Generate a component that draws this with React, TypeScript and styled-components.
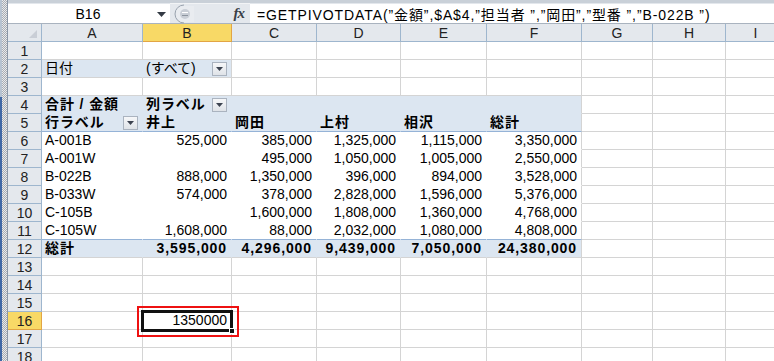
import styled, { createGlobalStyle } from "styled-components";

const GlobalStyle = createGlobalStyle`
  html, body {
    margin: 0;
    padding: 0;
    background: #ffffff;
    overflow: hidden;
  }
  * {
    box-sizing: border-box;
  }
`;

const FONT = `"Liberation Sans", "Noto Sans CJK JP", sans-serif`;

const GRID = "#d4d4d4";
const HEAD_LINE = "#9eb6ce";
const PIVOT = "#dce6f1";
const PIVOT_LINE = "#95b3d7";

const COLS = [101, 89, 85, 84, 86, 95, 71, 73, 60];
const LETTERS = ["A", "B", "C", "D", "E", "F", "G", "H", "I"];
const ROW_COUNT = 18;

type CellSpec = {
    text?: string;
    right?: boolean;
    bold?: boolean;
    drop?: boolean;
    selected?: boolean;
};

const names = ["井上", "岡田", "上村", "相沢", "総計"];

const data: [string, string[]][] = [
    ["A-001B", ["525,000", "385,000", "1,325,000", "1,115,000", "3,350,000"]],
    ["A-001W", ["", "495,000", "1,050,000", "1,005,000", "2,550,000"]],
    ["B-022B", ["888,000", "1,350,000", "396,000", "894,000", "3,528,000"]],
    ["B-033W", ["574,000", "378,000", "2,828,000", "1,596,000", "5,376,000"]],
    ["C-105B", ["", "1,600,000", "1,808,000", "1,360,000", "4,768,000"]],
    ["C-105W", ["1,608,000", "88,000", "2,032,000", "1,080,000", "4,808,000"]],
];

const totals = ["3,595,000", "4,296,000", "9,439,000", "7,050,000", "24,380,000"];

// 행/열 번호로 셀 내용 결정
const cellAt = (r: number, c: number): CellSpec => {
    if (r === 2 && c === 0) return { text: "日付" };
    if (r === 2 && c === 1) return { text: "(すべて)", drop: true };
    if (r === 4 && c === 0) return { text: "合計 / 金額", bold: true };
    if (r === 4 && c === 1) return { text: "列ラベル", bold: true, drop: true };
    if (r === 5 && c === 0) return { text: "行ラベル", bold: true, drop: true };
    if (r === 5 && c >= 1 && c <= 5) return { text: names[c - 1], bold: true };
    if (r >= 6 && r <= 11 && c <= 5) {
        const [label, vals] = data[r - 6];
        if (c === 0) return { text: label };
        return { text: vals[c - 1], right: true };
    }
    if (r === 12 && c === 0) return { text: "総計", bold: true };
    if (r === 12 && c >= 1 && c <= 5) return { text: totals[c - 1], bold: true, right: true };
    if (r === 16 && c === 1) return { text: "1350000", right: true, selected: true };
    return {};
};

type Fill = "none" | "blue" | "white";

const fillAt = (r: number, c: number): Fill => {
    if (r === 2 && c <= 1) return "blue";
    if ((r === 4 || r === 5 || r === 12) && c <= 5) return "blue";
    if (r >= 6 && r <= 11 && c <= 5) return "white";
    return "none";
};

const bordersAt = (r: number, c: number, fill: Fill) => {
    const same = fill === "blue" ? PIVOT : "#ffffff";
    let rb = GRID;
    let bb = GRID;
    if (fill !== "none") {
        const lastCol = r === 2 ? 1 : 5;
        if (c < lastCol) rb = same;
    }
    if (c <= 5) {
        if (r === 5 || r === 11) bb = PIVOT_LINE;
        else if (r === 4) bb = PIVOT;
        else if (r >= 6 && r <= 10) bb = "#ffffff";
    }
    return { rb, bb };
};

const DropButton = () => (
    <Drop>
        <svg width="7" height="4" viewBox="0 0 7 4">
            <path d="M0 0 H7 L3.5 4 Z" fill="#3c4350" />
        </svg>
    </Drop>
);

const OvalButton = () => (
    <svg width="20" height="20" viewBox="0 0 20 20">
        <path d="M10 1 A9 9 0 0 0 10 19" fill="none" stroke="#9aa3ae" strokeWidth="1" />
        <path d="M10 2 A8 8 0 0 0 10 18 H20 V2 Z" fill="#e9ecf0" />
        <circle cx="11" cy="10" r="5" fill="#c9ced6" />
        <rect x="8" y="8" width="6" height="1" fill="#ffffff" />
        <rect x="8" y="11" width="6" height="1" fill="#8c949e" />
    </svg>
);

const App = () => {
    return (
        <>
            <GlobalStyle />
            <Page>
                <LeftStrip />
                <Main>
                    <FormulaBar>
                        <NameBox>
                            <NameText>B16</NameText>
                            <NameArrow>
                                <svg width="9" height="5" viewBox="0 0 9 5">
                                    <path d="M0 0 H9 L4.5 5 Z" fill="#333a44" />
                                </svg>
                            </NameArrow>
                        </NameBox>
                        <FxArea>
                            <OvalButton />
                            <Fx>fx</Fx>
                        </FxArea>
                        <FormulaInput>
                            =GETPIVOTDATA(”金額”,$A$4,”担当者 ”,”岡田”,”型番 ”,”B-022B ”)
                        </FormulaInput>
                    </FormulaBar>
                    <BarGap />
                    <Sheet>
                        <HeaderRow>
                            <Corner>
                                <svg width="8" height="8" viewBox="0 0 8 8">
                                    <path d="M8 0 V8 H0 Z" fill="#c9ced6" />
                                </svg>
                            </Corner>
                            {COLS.map((w, i) => (
                                <ColHead key={i} $w={w} $active={i === 1}>
                                    {LETTERS[i]}
                                </ColHead>
                            ))}
                        </HeaderRow>
                        {Array.from({ length: ROW_COUNT }, (_, ri) => {
                            const r = ri + 1;
                            return (
                                <Row key={r}>
                                    <RowHead $active={r === 16}>{r}</RowHead>
                                    {COLS.map((w, c) => {
                                        const spec = cellAt(r, c);
                                        const fill = fillAt(r, c);
                                        const { rb, bb } = bordersAt(r, c, fill);
                                        return (
                                            <Cell
                                                key={c}
                                                $w={w}
                                                $fill={fill}
                                                $rb={rb}
                                                $bb={bb}
                                                $right={!!spec.right}
                                            >
                                                {spec.text && <CellText $bold={!!spec.bold}>{spec.text}</CellText>}
                                                {spec.drop && <DropButton />}
                                                {spec.selected && (
                                                    <>
                                                        <Selection>
                                                            <FillHandle />
                                                        </Selection>
                                                        <RedMark />
                                                    </>
                                                )}
                                            </Cell>
                                        );
                                    })}
                                </Row>
                            );
                        })}
                    </Sheet>
                </Main>
            </Page>
        </>
    );
};

export default App;

/* ================= styled ================= */

const Page = styled.div`
    display: flex;
    width: 774px;
    height: 361px;
    overflow: hidden;
    font-family: ${FONT};
    background: #ffffff;
`;

const LeftStrip = styled.div`
    width: 8px;
    flex-shrink: 0;
    background:
        linear-gradient(to bottom, #b7c3d1 0, #b7c3d1 97px, #3f67a5 97px, #3f67a5 100%) left / 2px 100% no-repeat,
        repeating-conic-gradient(#a9adb3 0% 25%, #e8eaed 0% 50%) 0 0 / 2px 2px;
    border-right: 1px solid #8a96a6;
`;

const Main = styled.div`
    flex: 1;
    min-width: 0;
    display: flex;
    flex-direction: column;
`;

const FormulaBar = styled.div`
    display: flex;
    align-items: stretch;
    height: 24px;
    padding-top: 3px;
    background: #c9d0d8;
    border-bottom: 1px solid #a9b3bf;
`;

const NameBox = styled.div`
    position: relative;
    width: 162px;
    display: flex;
    align-items: center;
    background: #ffffff;
    border-top: 1px solid #e3e7ec;
`;

const NameText = styled.span`
    flex: 1;
    text-align: center;
    font-size: 14px;
    color: #000000;
    padding-right: 2px;
`;

const NameArrow = styled.span`
    position: absolute;
    right: 4px;
    top: 8px;
    display: flex;
`;

const FxArea = styled.div`
    width: 80px;
    display: flex;
    align-items: center;
    justify-content: space-between;
    padding: 0 6px 0 4px;
    background: #e4e8ed;
    border-top: 1px solid #f2f4f6;
`;

const Fx = styled.span`
    font-family: "Liberation Serif", serif;
    font-style: italic;
    font-weight: bold;
    font-size: 15px;
    color: #3a3f47;
    letter-spacing: -1px;
`;

const FormulaInput = styled.div`
    flex: 1;
    display: flex;
    align-items: center;
    padding-left: 7px;
    background: #ffffff;
    border-top: 1px solid #e3e7ec;
    font-size: 14px;
    color: #000000;
    white-space: pre;
    overflow: hidden;
    letter-spacing: 0.9px;
`;

const BarGap = styled.div`
    height: 3px;
    background: #eceff2;
`;

const Sheet = styled.div`
    display: flex;
    flex-direction: column;
`;

const HeaderRow = styled.div`
    display: flex;
    height: 18px;
`;

const Corner = styled.div`
    width: 34px;
    flex-shrink: 0;
    display: flex;
    align-items: flex-end;
    justify-content: flex-end;
    padding: 0 4px 3px 0;
    background: #e4e8ed;
    border-right: 1px solid ${HEAD_LINE};
    border-bottom: 1px solid ${HEAD_LINE};
`;

const ColHead = styled.div<{ $w: number; $active: boolean }>`
    width: ${({ $w }) => $w}px;
    flex-shrink: 0;
    display: flex;
    align-items: center;
    justify-content: center;
    font-size: 14px;
    color: #222222;
    background: ${({ $active }) => ($active ? "#f8d966" : "#e4e8ed")};
    border-right: 1px solid ${({ $active }) => ($active ? "#e2a544" : HEAD_LINE)};
    border-bottom: 1px solid ${({ $active }) => ($active ? "#e2a544" : HEAD_LINE)};
`;

const Row = styled.div`
    display: flex;
    height: 18px;
`;

const RowHead = styled.div<{ $active: boolean }>`
    width: 34px;
    flex-shrink: 0;
    display: flex;
    align-items: center;
    justify-content: center;
    font-size: 14px;
    color: #222222;
    background: ${({ $active }) => ($active ? "#f8d966" : "#e4e8ed")};
    border-right: 1px solid ${({ $active }) => ($active ? "#e2a544" : HEAD_LINE)};
    border-bottom: 1px solid ${({ $active }) => ($active ? "#e2a544" : HEAD_LINE)};
`;

const Cell = styled.div<{
    $w: number;
    $fill: Fill;
    $rb: string;
    $bb: string;
    $right: boolean;
}>`
    position: relative;
    width: ${({ $w }) => $w}px;
    flex-shrink: 0;
    display: flex;
    align-items: center;
    justify-content: ${({ $right }) => ($right ? "flex-end" : "flex-start")};
    padding: 0 4px 0 3px;
    background: ${({ $fill }) => ($fill === "blue" ? PIVOT : "#ffffff")};
    border-right: 1px solid ${({ $rb }) => $rb};
    border-bottom: 1px solid ${({ $bb }) => $bb};
    font-size: 14px;
    color: #000000;
    white-space: nowrap;
`;

const CellText = styled.span<{ $bold: boolean }>`
    flex: 0 1 auto;
    font-weight: ${({ $bold }) => ($bold ? "bold" : "normal")};
    letter-spacing: ${({ $bold }) => ($bold ? "0.9px" : "0")};
    line-height: 17px;
`;

const Drop = styled.span`
    margin-left: auto;
    width: 15px;
    height: 14px;
    display: flex;
    align-items: center;
    justify-content: center;
    background: linear-gradient(#f6f7f9, #dfe3e8);
    border: 1px solid #aab3bf;
`;

const Selection = styled.div`
    position: absolute;
    z-index: 2;
    left: -2px;
    top: -2px;
    right: -2px;
    bottom: -3px;
    border: 3px solid #111111;
    pointer-events: none;
`;

const FillHandle = styled.div`
    position: absolute;
    right: -5px;
    bottom: -5px;
    width: 6px;
    height: 6px;
    background: #111111;
    border: 1px solid #ffffff;
`;

const RedMark = styled.div`
    position: absolute;
    z-index: 3;
    left: -6px;
    top: -6px;
    right: -8px;
    bottom: -8px;
    border: 2px solid #ee1111;
    pointer-events: none;
`;
